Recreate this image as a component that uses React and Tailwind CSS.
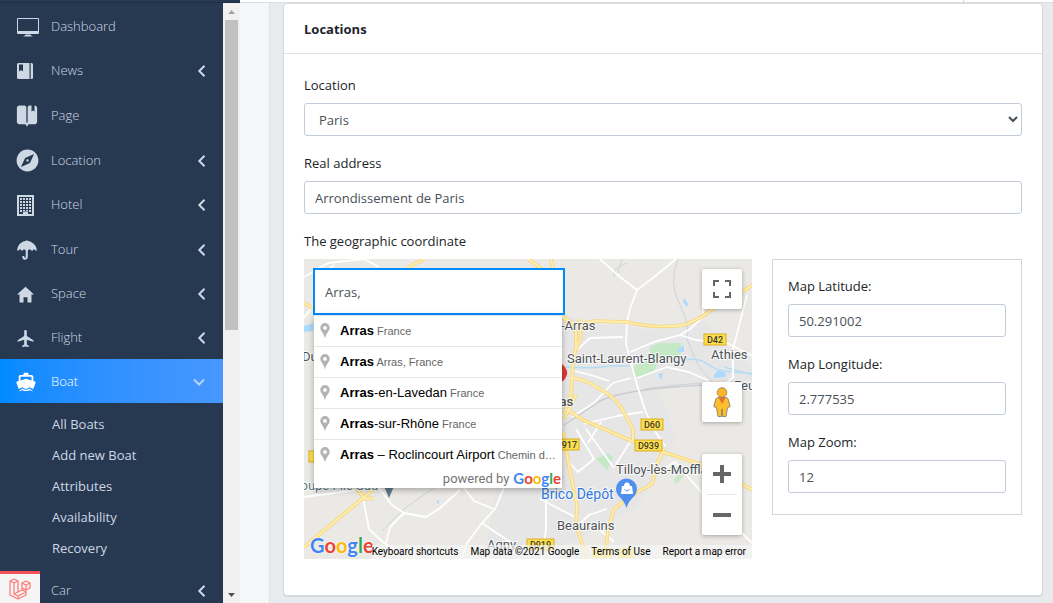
import React from "react";
import {
  IoIosBookmarks,
  IoMdCompass,
  IoMdUmbrella,
  IoMdHome,
  IoMdAirplane,
  IoMdBoat,
} from "react-icons/io";

function DesktopIcon() {
  return (
    <svg viewBox="0 0 22 19" className="ml-px h-[19px] w-[22px]" fill="currentColor" aria-hidden="true">
      <path fillRule="evenodd" d="M1 0h20a1 1 0 0 1 1 1v14a1 1 0 0 1-1 1H1a1 1 0 0 1-1-1V1a1 1 0 0 1 1-1zm0 1v12h20V1z" />
      <path d="M8.500 16.500h5l.5 1 2 1H6l2-1z" />
    </svg>
  );
}

function NotebookIcon() {
  return (
    <svg viewBox="0 0 16 16" className="ml-px size-4" fill="currentColor" aria-hidden="true">
      <path fillRule="evenodd" d="M1.500 0h11v16h-11A1.500 1.500 0 0 1 0 14.500v-13A1.500 1.500 0 0 1 1.500 0zM2 1.500v7l2-1.500 2 1.500v-7z" />
      <path d="M13.700 0h.8A1.500 1.500 0 0 1 16 1.500v13a1.500 1.500 0 0 1-1.500 1.500h-.8z" />
    </svg>
  );
}

function BuildingIcon() {
  const rows = [3, 6, 9, 12, 15];
  const cols = [3, 6, 9, 12];
  return (
    <svg viewBox="0 0 17 21" className="ml-px h-[21px] w-[17px]" fill="currentColor" aria-hidden="true">
      <path fillRule="evenodd" d="M0 0h17v21H0zM2 2v17h4v-2.500h5V19h4V2z" />
      {rows.map((y) =>
        cols.map((x) => (
          <rect key={x + "-" + y} x={x} y={y} width="2" height={y === 15 && (x === 6 || x === 9) ? 1 : 2} />
        ))
      )}
    </svg>
  );
}

const NAV = [
  { label: "Dashboard", icon: <DesktopIcon />, leaf: true },
  { label: "News", icon: <NotebookIcon /> },
  { label: "Page", icon: <IoIosBookmarks className="-ml-px size-6" />, leaf: true, tall: true },
  { label: "Location", icon: <IoMdCompass className="-ml-px size-[25px]" />, tall: true },
  { label: "Hotel", icon: <BuildingIcon /> },
  { label: "Tour", icon: <IoMdUmbrella className="-ml-px size-6" />, tall: true },
  { label: "Space", icon: <IoMdHome className="-ml-px size-[21px]" /> },
  { label: "Flight", icon: <IoMdAirplane className="-ml-px size-[21px]" /> },
  {
    label: "Boat",
    icon: <IoMdBoat className="-ml-px size-[22px]" />,
    children: ["All Boats", "Add new Boat", "Attributes", "Availability", "Recovery"],
  },
  { label: "Car" },
];

function NavItem({ item }) {
  const active = Boolean(item.children);
  return (
    <li>
      <a
        href="#"
        className={
          "flex items-center pt-[2px] pr-[17px] pl-4 text-[13px] font-light " +
          (item.tall ? "h-[45px] " : "h-11 ") +
          (active ? "bg-linear-to-r from-[#008aff] to-[#4797ff] text-white" : "text-[#cdd8e4]")
        }
      >
        <span className="flex w-[35px] items-center">{item.icon}</span>
        <span className="flex-1">{item.label}</span>
        {!item.leaf && (
          <svg
            viewBox="0 0 12 12"
            className={active ? "mr-[1px] size-3" : "-mr-[2px] size-3"}
            fill="none"
            stroke={active ? "#b5d6fb" : "currentColor"}
            strokeWidth="2"
            aria-hidden="true"
          >
            <path d={active ? "M1 3.500l5 5 5-5" : "M8.500.8L3.300 6l5.200 5.200"} />
          </svg>
        )}
      </a>
      {active && (
        <ul className="pt-[6px] pb-1">
          {item.children.map((c) => (
            <li key={c}>
              <a href="#" className="flex h-[31px] items-center pl-[52px] text-[13px] text-[#cdd8e4]">
                {c}
              </a>
            </li>
          ))}
        </ul>
      )}
    </li>
  );
}

function Field({ id, label, value }) {
  return (
    <div>
      <label htmlFor={id} className="block h-5 text-[13px] leading-5 text-[#212529]">
        {label}
      </label>
      <input
        id={id}
        defaultValue={value}
        className="mt-2 block h-[33px] w-full rounded-[3px] border border-[#c3cdd9] bg-white px-[10px] text-[13px] text-[#495057] outline-none"
      />
    </div>
  );
}

function RoadBadge({ x, y, w, children }) {
  return (
    <g>
      <rect x={x} y={y} width={w} height="11" fill="#fddf4e" stroke="#d9ae22" />
      <text x={x + w / 2} y={y + 9} fontSize="9" textAnchor="middle" fill="#3c3a30" fontWeight="500">
        {children}
      </text>
    </g>
  );
}

const WHITE_ROADS = [
  "M296 0L316 18L333 31L350 18L372 0",
  "M333 31L326 50L323 63L322 85L333 126L341 151L349 169L361 187",
  "M319 78L286 79L274 90",
  "M326 93L350 83L376 76L392 81L423 84L449 97",
  "M350 83L376 76L386 70L399 58V48",
  "M443 36L436 63L429 90V119L409 133",
  "M333 119L363 108L385 113L405 122",
  "M327 119L309 124L290 144L268 158",
  "M271 112L290 117L305 122",
  "M280 165L313 157L339 153",
  "M328 180L312 205 M282 170L310 209M272 170L290 200L274 213L262 200",
  "M297 163L284 184",
  "M59 239L65 270L80 284L90 290L119 299",
  "M74 228L88 246L100 254L122 258L135 250L156 231",
  "M200 229L191 250L178 264L163 284L158 299M178 264L206 283",
  "M160 229L170 242L190 250",
  "M0 238L76 228",
  "M100 254L86 268L82 284",
  "M242 240L242 270L238 300 M236 240L271 258",
  "M303 250L285 256L272 268",
  "M351 215L371 203L399 235L449 285",
  "M295 270L310 283",
  "M0 59L14 40L12 20L30 6",
  "M0 18L24 4L60 0L75 8",
];
const YELLOW_ROADS = [
  "M258 57L272 66L290 62L323 63Q352 70 380 66Q396 60 407 51L449 26",
  "M258 57L272 73V88L269 105L267 135L260 155",
  "M275 60L277 78L270 95",
  "M266 119Q282 120 294 129Q310 137 318 150L329 170V182",
  "M260 160L272 136 M262 150L279 161L328 182L359 193L399 206L449 231",
  "M360 190L353 205L348 225L328 236L310 250L304 270L301 299",
  "M259 173L266 213L273 246L272 266L283 299",
  "M78 223L59 239L29 264L0 288",
  "M120 0L103 9M247 0L249 10M224 0L238 10",
  "M0 44L12 51",
  "M52 229L61 240L70 239",
];

function MapDrawing() {
  return (
    <svg
      viewBox="0 0 448 300"
      preserveAspectRatio="xMinYMin slice"
      className="block h-full w-full"
      fontFamily="Roboto, Arial, sans-serif"
      aria-label="Map of Arras"
    >
      <rect width="448" height="300" fill="#eae9e5" />
      <path
        d="M245 50L290 66L322 66L345 72L400 60L420 85L448 108V120L355 130L372 180L350 225L330 250L270 282L236 300H180L190 240L236 60z"
        fill="#e6e6e6"
      />
      <path d="M346 88l10-4h21v14l-20 3-4 5-4 8-18 6-3-12 19-8zM292 200l12-6 5 4-6 13zM370 220l5-5 5 2-8 8zM257 216l3 3-3 3z" fill="#c5e8c5" />
      <path d="M380 39l4 6-1 3-4-5zM410 116l4-5 8 3-1 4-11 1zM354 115l5-1-2 7zM372 92l8-6v7zM0 67l9-3v8l-9 1zM132 242l3-1v4z" fill="#aadaff" />
      <path d="M262 108Q290 110 306 107H326M380 101Q395 98 405 106T449 114M420 108L449 116" fill="none" stroke="#b5dcf5" strokeWidth="1.500" />
      <path
        d="M323 4Q307 10 310 18M318 0L314 14M374 0Q364 24 376 46Q386 66 383 80Q390 100 397 110L409 124M340 130Q390 122 449 124M78 272L100 250L156 210"
        fill="none"
        stroke="#d0d3d6"
      />
      <path d="M260 166L296 142Q320 130 400 126" fill="none" stroke="#c8cbd0" strokeWidth="1.500" />
      {WHITE_ROADS.map((d) => (
        <path key={d} d={d} fill="none" stroke="#fff" strokeWidth="1.800" strokeLinejoin="round" />
      ))}
      {YELLOW_ROADS.map((d) => (
        <path key={d} d={d} fill="none" stroke="#f7d67c" strokeWidth="3.600" strokeLinejoin="round" />
      ))}
      {YELLOW_ROADS.map((d) => (
        <path key={d} d={d} fill="none" stroke="#ffeeb0" strokeWidth="1.800" strokeLinejoin="round" />
      ))}
      <path d="M246 128v-26q13-1 17 10q1 5-4 10z" fill="#dd3b32" />
      <path d="M79 225h12l-6 14z" fill="#607d8b" />
      <RoadBadge x={400} y={75} w={22}>D42</RoadBadge>
      <RoadBadge x={337} y={160} w={22}>D60</RoadBadge>
      <RoadBadge x={331} y={181} w={27}>D939</RoadBadge>
      <RoadBadge x={250} y={180} w={25}>D917</RoadBadge>
      <RoadBadge x={5} y={192} w={25}>D60</RoadBadge>
      <RoadBadge x={223} y={280} w={27}>D919</RoadBadge>
      <path d="M288 289h20v10h-20zM314 289h16v10h-16z" fill="#fddf4e" />
      <g fontSize="13" fill="#4d5358" stroke="#fff" strokeWidth="2" strokeOpacity=".8" paintOrder="stroke">
        <text x="257" y="71">-Arras</text>
        <text x="263" y="104">Saint-Laurent-Blangy</text>
        <text x="407" y="100">Athies</text>
        <text x="430" y="131">Feuchy</text>
        <text x="238" y="147" fontWeight="500">Arras</text>
        <text x="312" y="215">Tilloy-lès-Mofflaines</text>
        <text x="253" y="271">Beaurains</text>
        <text x="183" y="290">Agny</text>
        <text x="-2" y="102">Duisans</text>
        <text x="-12" y="231" fill="#607d8b">Coupe File Sud</text>
        <text x="237" y="240" fontSize="14" fill="#2f78e0">Brico Dépôt</text>
      </g>
      <path d="M322.500 249C320 239 312 238 312 230A10.300 10.300 0 0 1 333 230C333 238 325 239 322.500 249z" fill="#4f8ff0" />
      <path d="M318 227h10l1 8h-12zM320.500 227v-1a2.500 2.500 0 0 1 5 0v1" fill="#fff" />
      <path d="M320.500 227v-.5a2.300 2.300 0 0 1 4.800 0v.5" fill="none" stroke="#fff" />
      <path d="M320.500 230q2.500 4 5 0" fill="none" stroke="#4f8ff0" />
    </svg>
  );
}

function GoogleWord() {
  return (
    <>
      <span className="text-[#4285f4]">G</span>
      <span className="text-[#ea4335]">o</span>
      <span className="text-[#fbbc05]">o</span>
      <span className="text-[#4285f4]">g</span>
      <span className="text-[#34a853]">l</span>
      <span className="text-[#ea4335]">e</span>
    </>
  );
}

const SUGGESTIONS = [
  ["Arras", "", "France"],
  ["Arras", "", "Arras, France"],
  ["Arras", "-en-Lavedan", "France"],
  ["Arras", "-sur-Rhône", "France"],
  ["Arras", " – Roclincourt Airport", "Chemin des Avions"],
];

function MapPanel() {
  return (
    <div className="relative h-[300px] min-w-0 flex-1 overflow-hidden font-[Roboto,Arial,sans-serif]">
      <MapDrawing />

      <input
        aria-label="Search address"
        defaultValue="Arras,"
        className="absolute top-[9px] left-[9px] h-[47px] w-[252px] border-2 border-[#008aff] bg-white px-[10px] font-['Open_Sans',sans-serif] text-[13px] text-[#495057] outline-none"
      />
      <div className="absolute top-[56px] left-[10px] w-[248px] bg-white pb-px font-['Liberation_Sans',Arial,sans-serif] shadow-[0_2px_6px_rgba(0,0,0,0.3)]">
        <ul>
          {SUGGESTIONS.map(([bold, rest, area], i) => (
            <li
              key={i}
              className="flex h-[31px] items-center border-t border-[#e6e6e6] pr-1 pl-[6px] text-[11px] text-[#666]"
            >
              <svg viewBox="0 0 10 16" className="mr-[10px] h-4 w-[10px] shrink-0" aria-hidden="true">
                <path
                  fillRule="evenodd"
                  fill="#b3b3b3"
                  d="M5 0a4.700 4.700 0 0 1 4.700 4.700C9.700 8 6.500 9 5 15.500C3.500 9 .3 8 .3 4.700A4.700 4.700 0 0 1 5 0zm0 3a1.900 1.900 0 1 0 0 3.800A1.900 1.900 0 0 0 5 3z"
                />
              </svg>
              <span className="truncate leading-[30px]">
                <span className="text-[13px] text-black">
                  <b>{bold}</b>
                  {rest}
                </span>{" "}
                {area}
              </span>
            </li>
          ))}
        </ul>
        <div className="flex h-[17px] items-center justify-end gap-1 pr-px font-[Roboto,sans-serif] text-[13px] text-[#757575]">
          powered by
          <span className="font-[Lato,sans-serif] text-[15px] font-bold">
            <GoogleWord />
          </span>
        </div>
      </div>

      <button
        aria-label="Toggle fullscreen view"
        className="absolute top-[10px] right-[10px] flex size-10 items-center justify-center rounded-[2px] bg-white shadow-[0_1px_4px_rgba(0,0,0,0.3)]"
      >
        <svg viewBox="0 0 18 18" className="size-[18px]" fill="#666" aria-hidden="true">
          <path d="M0 0v6h2V2h4V0zM18 0h-6v2h4v4h2zM16 16h-4v2h6v-6h-2zM2 12H0v6h6v-2H2z" />
        </svg>
      </button>
      <button
        aria-label="Street View"
        className="absolute top-[123px] right-[10px] flex size-10 items-center justify-center rounded-[2px] bg-white shadow-[0_1px_4px_rgba(0,0,0,0.3)]"
      >
        <svg viewBox="0 0 18 30" className="h-[30px] w-[18px]" aria-hidden="true">
          <path
            d="M4.500 10.500Q3 11 2.500 13L.8 19.500l2.700 1.300L5 29.500h3.500L9 22l.5 7.500H13l1.500-8.700 2.700-1.300L15.500 13Q15 11 13.500 10.500z"
            fill="#fdbf2d"
            stroke="#7a7468"
            strokeWidth=".8"
          />
          <path d="M5.500 10.500L9 17l3.500-6.500z" fill="#e5742f" />
          <circle cx="9" cy="5.500" r="4.800" fill="#fdb52a" stroke="#8a7d62" strokeWidth=".8" />
        </svg>
      </button>
      <div className="absolute top-[195px] right-[10px] flex w-10 flex-col items-center rounded-[2px] bg-white shadow-[0_1px_4px_rgba(0,0,0,0.3)]">
        <button aria-label="Zoom in" className="flex size-10 items-center justify-center">
          <svg viewBox="0 0 18 18" className="size-[18px]" fill="#666" aria-hidden="true">
            <path d="M0 7h7V0h4v7h7v4h-7v7H7v-7H0z" />
          </svg>
        </button>
        <div className="h-px w-[30px] bg-[#e6e6e6]" />
        <button aria-label="Zoom out" className="flex size-10 items-center justify-center">
          <svg viewBox="0 0 18 18" className="size-[18px]" fill="#666" aria-hidden="true">
            <path d="M0 7h18v4H0z" />
          </svg>
        </button>
      </div>

      <div className="absolute bottom-0 left-[6px] font-[Lato,sans-serif] text-[20px] leading-7 font-bold [text-shadow:0_0_2px_#fff,0_0_1px_#fff]">
        <GoogleWord />
      </div>
      <div className="absolute right-0 bottom-0 flex h-[14px] text-[10px] leading-[14px] text-black">
        <button className="bg-[#f5f5f5]/70 pr-[6px] pl-0">Keyboard shortcuts</button>
        <span className="bg-[#f5f5f5]/70 px-[6px]">Map data ©2021 Google</span>
        <a href="#" className="bg-[#f5f5f5]/70 px-[6px]">Terms of Use</a>
        <a href="#" className="bg-[#f5f5f5]/70 px-[6px]">Report a map error</a>
      </div>
    </div>
  );
}

export default function App() {
  return (
    <div className="flex h-screen flex-col overflow-hidden bg-[#e7ebee] font-['Open_Sans','Noto_Sans',sans-serif]">
      <header className="flex h-[3px] shrink-0">
        <div className="w-60 border-b border-[#1d2d44] bg-[#273951]" />
        <div className="flex flex-1 justify-end border-b border-[#dcdfe2] bg-white pr-[89px]">
          <div className="w-px bg-[#d5d8db]" />
        </div>
      </header>

      <div className="flex min-h-0 flex-1">
        <nav className="w-[223px] shrink-0 overflow-hidden bg-[#273951] pt-px">
          <ul>
            {NAV.map((item) => (
              <NavItem key={item.label} item={item} />
            ))}
          </ul>
        </nav>
        <div className="flex w-[17px] shrink-0 flex-col items-center bg-[#f1f1f1]" aria-hidden="true">
          <svg viewBox="0 0 17 17" className="size-[17px]" fill="#a3a3a3">
            <path d="M5 11h7L8.500 7z" />
          </svg>
          <div className="h-[310px] w-[13px] bg-[#c1c1c1]" />
          <div className="flex-1" />
          <svg viewBox="0 0 17 17" className="size-[17px]" fill="#505050">
            <path d="M5 7h7L8.500 11z" />
          </svg>
        </div>
        <div className="w-[30px] shrink-0 border-r border-[#dfe2e6] bg-[#f5f6f8]" />

        <main className="min-w-0 flex-1 overflow-hidden pr-[10px] pl-[13px]">
          <section className="rounded-[4px] border border-[#d5d9dd] bg-white pb-9 shadow-[0_1px_1px_rgba(0,0,0,0.08)]">
            <h2 className="flex h-[50px] items-center border-b border-[#dfe2e5] px-5 pt-[2px] text-[13px] font-bold text-[#1f2430]">
              Locations
            </h2>
            <form className="flex flex-col gap-[17px] px-5 pt-[21px]">
              <div>
                <label htmlFor="location" className="block h-5 text-[13px] leading-5 text-[#212529]">
                  Location
                </label>
                <select
                  id="location"
                  className="mt-2 block h-[33px] w-full rounded-[3px] border border-[#c3cdd9] bg-white px-[10px] text-[13px] text-[#495057] outline-none"
                >
                  <option>Paris</option>
                </select>
              </div>
              <Field id="address" label="Real address" value="Arrondissement de Paris" />
              <div>
                <h3 className="h-5 text-[13px] leading-5 text-[#212529]">The geographic coordinate</h3>
                <div className="mt-2 flex items-start gap-5">
                  <MapPanel />
                  <div className="flex w-[250px] shrink-0 flex-col gap-[17px] border border-[#d3d6d9] px-[15px] pt-4 pb-[21px]">
                    <Field id="lat" label="Map Latitude:" value="50.291002" />
                    <Field id="lng" label="Map Longitude:" value="2.777535" />
                    <Field id="zoom" label="Map Zoom:" value="12" />
                  </div>
                </div>
              </div>
            </form>
          </section>
        </main>
      </div>

      <button
        aria-label="Open debug bar"
        className="fixed bottom-0 left-0 flex h-8 w-10 items-center justify-center border-t-[3px] border-[#f4505a] bg-[#f5f5f5]"
      >
        <svg viewBox="0 0 22 22" className="size-[22px]" fill="none" stroke="#ff7d78" strokeWidth="1.300" strokeLinejoin="round" aria-hidden="true">
          <path d="M1 3l4-2 4 2v11l4-2V5l4-2 4 2v5l-4 2v5l-8 4-8-4zM1 3l4 2 4-2M5 5v11l4 2 8-4M13 5l4 2 4-2M17 7v5l-4-2M5 16l4-2M9 18v3M13 12l4 2" />
        </svg>
      </button>
    </div>
  );
}
